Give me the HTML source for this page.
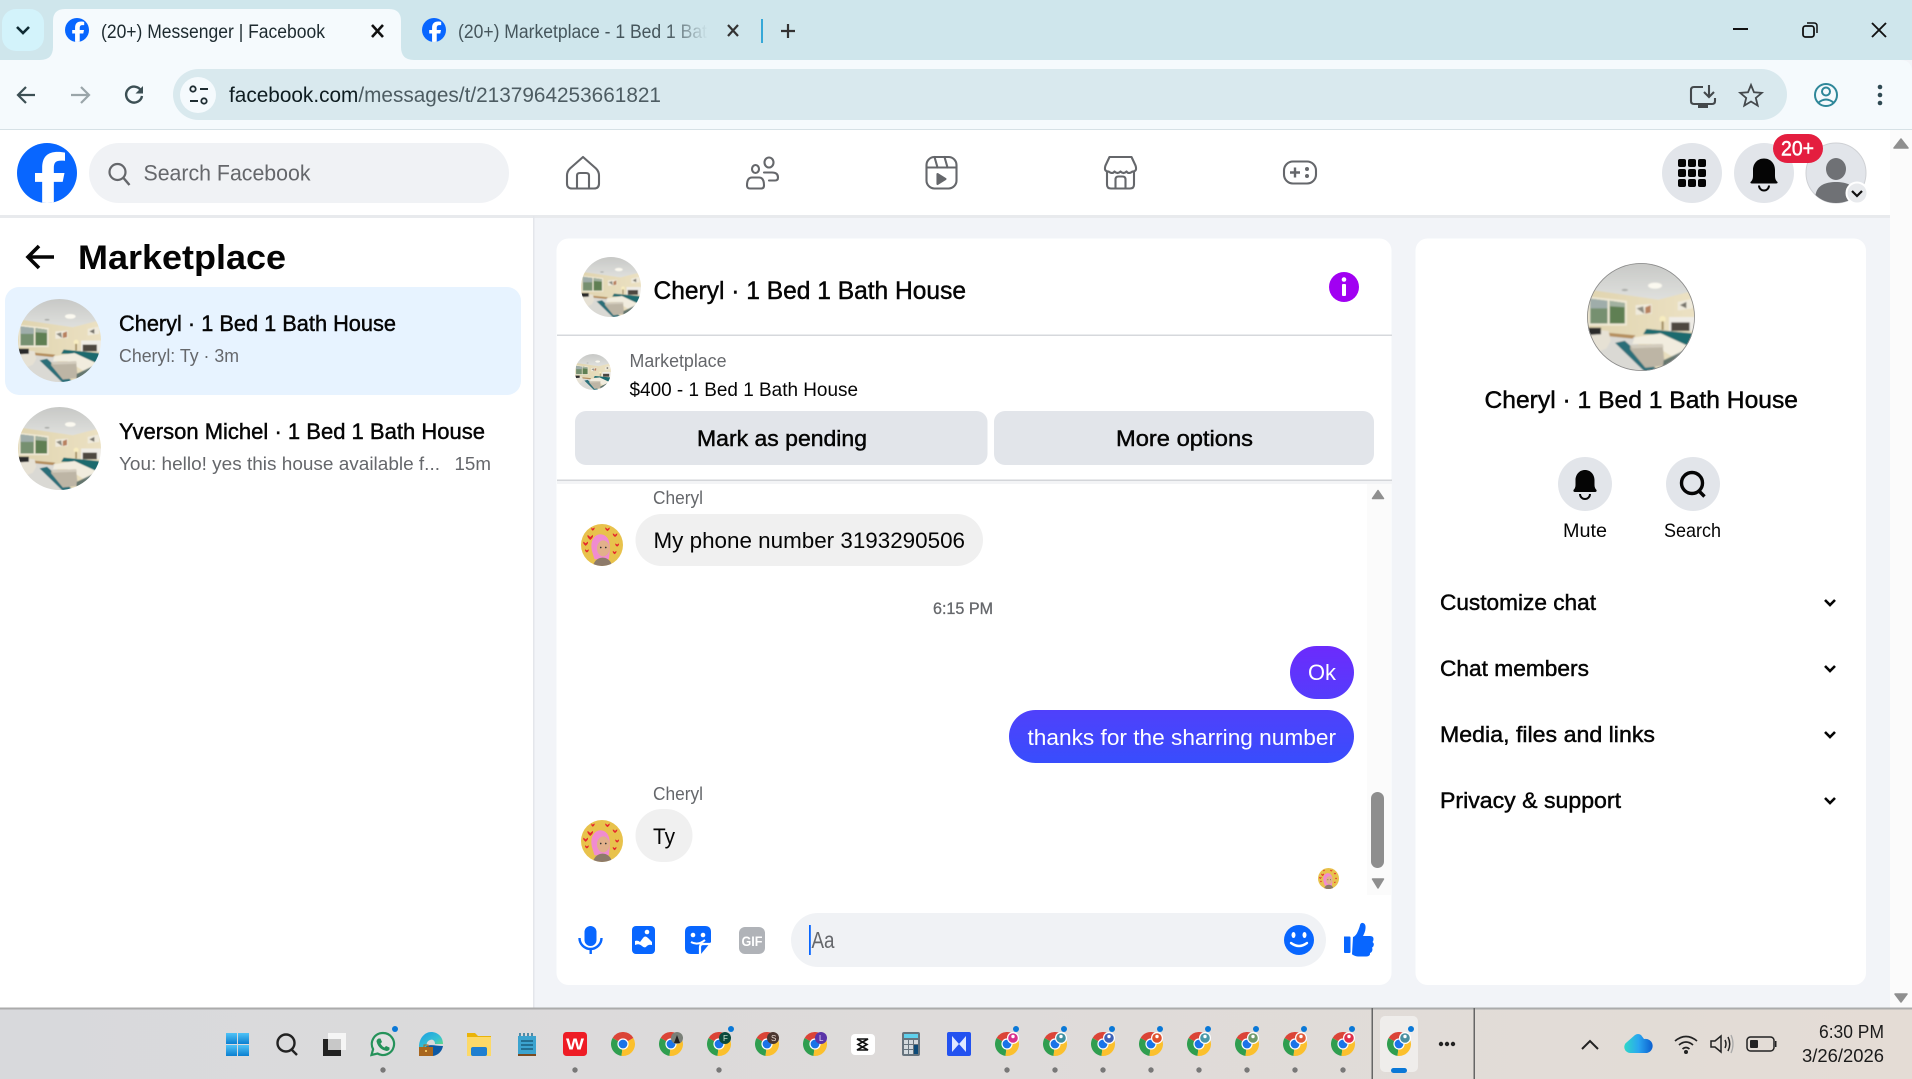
<!DOCTYPE html>
<html lang="en"><head><meta charset="utf-8"><title>Messenger | Facebook</title>
<style>
html,body{margin:0;padding:0;width:1912px;height:1079px;overflow:hidden;background:#f2f4f8}
svg{display:block;font-family:"Liberation Sans",sans-serif}
.m{stroke:currentColor;stroke-width:.45px}
.g{fill:#65676b;color:#65676b}
.k{fill:#050505;color:#050505}
</style></head><body>
<svg width="1912" height="1079" viewBox="0 0 1912 1079" xmlns="http://www.w3.org/2000/svg">
<defs>
<filter id="soft" x="-5%" y="-5%" width="110%" height="110%"><feGaussianBlur stdDeviation=".7"/></filter>
<linearGradient id="msg" gradientUnits="userSpaceOnUse" x1="0" y1="646" x2="0" y2="763"><stop offset="0" stop-color="#6c2bfc"/><stop offset=".6" stop-color="#4d42fb"/><stop offset="1" stop-color="#384dfd"/></linearGradient>
<linearGradient id="bar" x1="0" x2="1" y1="0" y2="0"><stop offset="0" stop-color="#d8d9dc"/><stop offset=".5" stop-color="#dedbda"/><stop offset="1" stop-color="#e4dcd5"/></linearGradient>
<linearGradient id="fade" x1="0" x2="1" y1="0" y2="0"><stop offset="0" stop-color="#cfe6ec" stop-opacity="0"/><stop offset="1" stop-color="#cfe6ec"/></linearGradient>
<linearGradient id="ceil" x1="0" x2="0" y1="0" y2="1"><stop offset="0" stop-color="#c4c5c3"/><stop offset="1" stop-color="#dfe0dd"/></linearGradient>
<linearGradient id="wall" x1="0" x2="1" y1="0" y2="0"><stop offset="0" stop-color="#dfd3ae"/><stop offset="1" stop-color="#ece2c4"/></linearGradient>
<linearGradient id="win" x1="0" x2="0" y1="0" y2="1"><stop offset="0" stop-color="#4fc3f7"/><stop offset="1" stop-color="#0b7fd0"/></linearGradient>
<linearGradient id="cloud" x1="0" x2="1" y1="0" y2="0"><stop offset="0" stop-color="#2fd8c8"/><stop offset=".5" stop-color="#2aa6f0"/><stop offset="1" stop-color="#0b5fd0"/></linearGradient>
<linearGradient id="edge" x1="0" x2="1" y1="0" y2="1"><stop offset="0" stop-color="#1b9de2"/><stop offset=".6" stop-color="#35c1d4"/><stop offset="1" stop-color="#6fe06a"/></linearGradient>
<clipPath id="c100"><circle cx="50" cy="50" r="50"/></clipPath>
<clipPath id="c36"><circle cx="18" cy="18" r="18"/></clipPath>

<symbol id="room" viewBox="0 0 100 100"><g clip-path="url(#c100)"><g filter="url(#soft)">
<rect x="-5" y="-5" width="110" height="110" fill="url(#wall)"/>
<path d="M-5 -5H105V25L97 26 66 34 4 25 -5 24Z" fill="url(#ceil)"/>
<ellipse cx="63" cy="21" rx="6.500" ry="2.800" fill="#fbf9f0"/><ellipse cx="35" cy="25" rx="3" ry="1" fill="#a9aba7"/>
<path d="M1 31L37 35V58L1 58Z" fill="#efe9d6"/>
<path d="M3 33L19 35V56L3 56Z" fill="#76906f"/><path d="M21 35L35 37V56L21 56Z" fill="#5f7f52"/>
<path d="M3 33L19 35V42L3 42Z" fill="#9fadaa"/><path d="M21 35L35 37V41L21 40Z" fill="#a2b1a0"/>
<path d="M45 39L60 38V47L45 48Z" fill="#efeadc"/><path d="M46 42L52 40 53 47Z" fill="#8c8a80"/><path d="M54 41L59 39V46L54 47Z" fill="#b8815f"/>
<path d="M84 36L98 33V42L84 44Z" fill="#efeadc"/><path d="M86 39L92 36V42Z" fill="#77746c"/>
<path d="M76 50H105V63H76Z" fill="#efece6"/><path d="M78 55H95V63H78Z" fill="#4d4640"/>
<circle cx="70" cy="52" r="3" fill="#f7ecc0"/><rect x="69" y="54" width="2" height="8" fill="#a38d60"/>
<path d="M-5 66L44 68 62 105H-5Z" fill="#dad9d4"/><path d="M2 63L45 67 42 70 2 66Z" fill="#b58f5f"/>
<path d="M-5 62H12L20 63 22 72 18 79 6 84 -5 78Z" fill="#e6e1d4"/><path d="M-5 60H13V66L-5 67Z" fill="#2a2a2c"/>
<path d="M55 61L97 65 105 75 93 78 70 66 52 66Z" fill="#1c6a6e"/>
<path d="M44 69L68 65 94 77 92 92 78 86 60 75 42 75Z" fill="#f1ecde"/>
<path d="M26 74L35 72 72 105H58Z" fill="#2a6e78"/>
<path d="M40 76L70 75 72 95 54 97 40 80Z" fill="#bdb5a5"/><path d="M40 76L70 75 71 78 42 79Z" fill="#d3ccbd"/>
<path d="M71 90L92 80 86 97 70 100Z" fill="#2c4a4c" opacity=".7"/>
</g></g></symbol>

<symbol id="cheryl" viewBox="0 0 100 100"><g clip-path="url(#c100)">
<rect width="100" height="100" fill="#e8c24c"/>
<g fill="#e5272d"><path d="M16 26l6 5 6-5q3 5-6 12-9-7-6-12z"/><path d="M6 42l5 4 5-4q3 4-5 10-8-6-5-10z"/><path d="M24 8l4 3 4-3q2 4-4 8-6-4-2-8z"/><path d="M58 8l5 4 5-4q2 4-5 9-7-5-5-9z"/><path d="M76 22l5 4 5-4q2 4-5 9-7-5-5-9z"/><path d="M82 46l4 3 4-3q2 4-4 8-6-4-4-8z"/><path d="M76 64l4 3 4-3q2 4-4 8-6-4-4-8z"/><path d="M10 60l4 3 4-3q2 4-4 8-6-4-4-8z"/></g>
<path d="M26 64C18 30 46 14 62 32 72 44 68 72 66 84H32Z" fill="#f08cd0"/>
<ellipse cx="53" cy="58" rx="15" ry="19" fill="#e2b08b"/>
<circle cx="47" cy="56" r="2" fill="#333"/><circle cx="59" cy="56" r="2" fill="#333"/>
<path d="M28 105C30 84 44 80 52 80S74 86 74 105Z" fill="#8d7a6a"/>
</g></symbol>

<symbol id="chrome" viewBox="0 0 24 24">
<path d="M12 12L1.6 6A12 12 0 0 1 22.4 6Z" fill="#db4437"/>
<path d="M12 12L1.6 6A12 12 0 0 0 10.5 23.9Z" fill="#2f9e4f"/>
<path d="M12 12L22.4 6A12 12 0 0 1 10.5 23.9Z" fill="#fbc02d"/>
<circle cx="12" cy="12" r="5.6" fill="#fff"/><circle cx="12" cy="12" r="4.4" fill="#1a73e8"/>
</symbol>
<symbol id="fb" viewBox="0 0 36 36"><circle cx="18" cy="18" r="18" fill="#0866ff"/><g clip-path="url(#c36)"><path d="M15.1 36V23.3h-4.3V18h4.3v-3c0-6.6 3-9.7 9.5-9.7 1.2 0 3.3.2 4.2.5v4.9c-.5 0-1.3-.1-2.3-.1-3.2 0-4.4 1.2-4.4 4.4V18h6.4l-1.1 5.3h-5.3V36z" fill="#fff"/></g></symbol>
</defs>

<!-- tab strip -->
<rect width="1912" height="60" fill="#cfe6ec"/>
<rect x="2" y="9" width="42" height="42" rx="14" fill="#d3f3fb"/>
<path d="M17 27l6 6 6-6" fill="none" stroke="#0e2a33" stroke-width="2.6"/>
<path d="M40 60Q53 60 53 47V21Q53 9 65 9H389Q401 9 401 21V47Q401 60 414 60Z" fill="#f5fafd"/>
<use href="#fb" x="65" y="18" width="24" height="24"/>
<text x="101" y="38" font-size="19" textLength="224" lengthAdjust="spacingAndGlyphs" fill="#1d2a2f">(20+) Messenger | Facebook</text>
<path d="M372 25l11 12M383 25l-11 12" stroke="#111" stroke-width="2.6"/>
<use href="#fb" x="422" y="18" width="24" height="24"/>
<text x="458" y="38" font-size="19" textLength="249" lengthAdjust="spacingAndGlyphs" fill="#46565c">(20+) Marketplace - 1 Bed 1 Bat</text>
<rect x="668" y="15" width="40" height="36" fill="url(#fade)"/><rect x="708" y="15" width="16" height="36" fill="#cfe6ec"/>
<path d="M728 25l10 11M738 25l-10 11" stroke="#333" stroke-width="2.2"/>
<rect x="761" y="19" width="2" height="24" fill="#35a8d8"/>
<path d="M788 24v14M781 31h14" stroke="#333" stroke-width="2.2"/>
<rect x="1733" y="28" width="15" height="2" fill="#111"/>
<rect x="1803" y="26" width="11" height="11" rx="2.5" fill="none" stroke="#111" stroke-width="1.8"/><path d="M1807 23h7q3 0 3 3v7" fill="none" stroke="#111" stroke-width="1.5"/>
<path d="M1872 23l14 14M1886 23l-14 14" stroke="#111" stroke-width="1.9"/>

<!-- toolbar -->
<path d="M0 60H1900Q1912 60 1912 72V129H0Z" fill="#f5fafd"/>
<rect y="129" width="1912" height="1.5" fill="#d6e1e6"/>
<path d="M35 95H19M26 87l-8 8 8 8" fill="none" stroke="#3c4f54" stroke-width="2.2"/>
<path d="M71 95H88M81 87l8 8-8 8" fill="none" stroke="#9aa5a9" stroke-width="2.2"/>
<path d="M141 90.500A8 8 0 1 0 142 96" fill="none" stroke="#3c4f54" stroke-width="2.4"/><path d="M143 86v7.500h-7.500z" fill="#3c4f54"/>
<rect x="173" y="69" width="1614" height="51" rx="25.5" fill="#d9e9ee"/>
<circle cx="198" cy="95" r="18" fill="#f5fafd"/>
<circle cx="193" cy="89" r="2.7" fill="none" stroke="#1f2d32" stroke-width="1.8"/><path d="M200 89h8M190 101h8" stroke="#1f2d32" stroke-width="1.9"/><circle cx="204" cy="101" r="2.7" fill="none" stroke="#1f2d32" stroke-width="1.8"/>
<text x="229" y="102" font-size="21.5" textLength="432" lengthAdjust="spacingAndGlyphs" fill="#4d5c62"><tspan fill="#0e1c20">facebook.com</tspan>/messages/t/2137964253661821</text>
<path d="M1703 87h-9q-3 0-3 3v11q0 3 3 3h18q3 0 3-3v-3" fill="none" stroke="#44494c" stroke-width="2.1"/><rect x="1698" y="104" width="10" height="4" fill="#44494c"/><path d="M1709 85v11M1704 92l5 5 5-5" fill="none" stroke="#44494c" stroke-width="2.1"/>
<path d="M1751 85l3 7.300 7.800.6-6 5.100 1.900 7.600-6.700-4.100-6.700 4.100 1.900-7.600-6-5.100 7.800-.6z" fill="none" stroke="#44494c" stroke-width="1.800"/>
<circle cx="1826" cy="95" r="11" fill="none" stroke="#2e8799" stroke-width="2"/><circle cx="1826" cy="91.500" r="4" fill="none" stroke="#2e8799" stroke-width="2"/><path d="M1818 103q8-7 16 0" fill="none" stroke="#2e8799" stroke-width="2"/>
<circle cx="1880" cy="87" r="2.300" fill="#2f4a53"/><circle cx="1880" cy="95" r="2.300" fill="#2f4a53"/><circle cx="1880" cy="103" r="2.300" fill="#2f4a53"/>

<!-- page -->
<rect y="130" width="1912" height="878" fill="#f2f4f8"/>
<rect x="1890" y="130" width="22" height="878" fill="#fbfbfb"/>
<path d="M1894 148l7-9 7 9z" fill="#8f8f8f" stroke="#8f8f8f" stroke-linejoin="round" stroke-width="1.500"/>
<path d="M1895 994l6 8 6-8z" fill="#8f8f8f" stroke="#8f8f8f" stroke-linejoin="round" stroke-width="1.500"/>
<rect y="215" width="1890" height="3" fill="#e8eaed"/>
<rect y="130" width="1890" height="85" fill="#fff"/>

<!-- header -->
<use href="#fb" x="17" y="143" width="60" height="60"/>
<rect x="89" y="143" width="420" height="60" rx="30" fill="#f0f2f5"/>
<circle cx="117.500" cy="172" r="8" fill="none" stroke="#65676b" stroke-width="2.200"/><path d="M123.500 178l6 7" stroke="#65676b" stroke-width="2.400"/>
<text x="143.500" y="180.500" font-size="22.500" textLength="167" lengthAdjust="spacingAndGlyphs" class="g">Search Facebook</text>

<g fill="none" stroke="#65676b" stroke-width="2.100" stroke-linejoin="round" stroke-linecap="round">
<g transform="translate(566,155.500)"><path d="M17 1.500L30 13Q33 16 33 20V28Q33 33 28 33H6Q1 33 1 28V20Q1 16 4 13Z"/><path d="M11 33V20Q11 17.500 14 17.500H20Q23 17.500 23 20V33"/></g>
<g transform="translate(745,155.500)"><ellipse cx="24" cy="7" rx="4.500" ry="5"/><ellipse cx="10.500" cy="13.500" rx="3.500" ry="4"/><path d="M2 30Q2 22 7 22H14Q19 22 19 30Q19 33 16 33H5Q2 33 2 30Z"/><path d="M19 17H27Q33 17 33 22Q33 25 30 25H24"/></g>
<g transform="translate(924.500,155.500)"><rect x="2" y="1.500" width="30" height="31.500" rx="8"/><path d="M2 12H32M10 1.500l3 10.500M20 1.500l3 10.500"/><path d="M13 18.500L21 23.500 13 28.500Z" fill="#65676b"/></g>
<g transform="translate(1103.500,155.500)"><path d="M6 1.500H28L32 10Q34 16 29 16 25 19 23 16 20 19 17 16 14 19 11 16 9 19 5 16 0 16 2 10Z"/><path d="M3.500 16V29Q3.500 33 7.500 33H26.500Q30.500 33 30.500 29V16"/><path d="M12 33V24Q12 21 15 21H19Q22 21 22 24V33"/></g>
<rect x="1284" y="161.500" width="32" height="22" rx="9"/>
</g>
<path d="M1295 167.500v10M1290 172.500h10" stroke="#65676b" stroke-width="2.400"/><circle cx="1307" cy="169" r="2" fill="#65676b"/><circle cx="1307" cy="176" r="2" fill="#65676b"/>

<circle cx="1692" cy="173" r="30" fill="#e2e5ea"/>
<g fill="#050505"><rect x="1678" y="159" width="8" height="8" rx="2"/><rect x="1688" y="159" width="8" height="8" rx="2"/><rect x="1698" y="159" width="8" height="8" rx="2"/><rect x="1678" y="169" width="8" height="8" rx="2"/><rect x="1688" y="169" width="8" height="8" rx="2"/><rect x="1698" y="169" width="8" height="8" rx="2"/><rect x="1678" y="179" width="8" height="8" rx="2"/><rect x="1688" y="179" width="8" height="8" rx="2"/><rect x="1698" y="179" width="8" height="8" rx="2"/></g>
<circle cx="1764" cy="173" r="30" fill="#e2e5ea"/>
<path d="M1764 158.500C1757 158.500 1753 164 1753 170V176Q1753 180 1750.500 182Q1750 183.500 1752 183.500H1776Q1778 183.500 1777.500 182Q1775 180 1775 176V170C1775 164 1771 158.500 1764 158.500Z" fill="#050505"/><path d="M1759 185.500a5 5 0 0 0 10 0" fill="none" stroke="#050505" stroke-width="2"/>
<circle cx="1836" cy="173" r="30" fill="#e2e5ea" stroke="#cfd1d5"/>
<ellipse cx="1836" cy="169" rx="10" ry="11" fill="#6f7175"/><path d="M1815.500 195C1817 185 1826 182 1836 182S1855 185 1857 195Q1848 203 1836 203T1815.500 195Z" fill="#6f7175"/>
<circle cx="1857" cy="193" r="10.500" fill="#e8eaed" stroke="#fff" stroke-width="2"/><path d="M1852 191l5 5 5-5" fill="none" stroke="#111" stroke-width="2.200"/>
<rect x="1773" y="134" width="50" height="29" rx="14.500" fill="#e41e3f"/>
<text x="1781" y="155.500" font-size="21" textLength="33" lengthAdjust="spacingAndGlyphs" fill="#fff" stroke="#fff" stroke-width=".5">20+</text>

<!-- left panel -->
<rect y="218" width="533" height="790" fill="#fff"/>
<rect x="533" y="216" width="1.500" height="792" fill="#e4e6eb"/>
<path d="M54 257H28M39 246L28 257 39 268" fill="none" stroke="#050505" stroke-width="3.600"/>
<text x="78" y="269" font-size="34" font-weight="700" textLength="208" lengthAdjust="spacingAndGlyphs" class="k">Marketplace</text>
<rect x="5" y="287" width="516" height="108" rx="14" fill="#e7f3ff"/>
<use href="#room" x="18" y="299" width="83" height="83"/>
<text x="119" y="331" font-size="22.500" textLength="277" lengthAdjust="spacingAndGlyphs" class="k m">Cheryl · 1 Bed 1 Bath House</text>
<text x="119" y="362" font-size="18.500" textLength="120" lengthAdjust="spacingAndGlyphs" class="g">Cheryl: Ty · 3m</text>
<use href="#room" x="18" y="407" width="83" height="83"/>
<text x="119" y="439" font-size="22.500" textLength="366" lengthAdjust="spacingAndGlyphs" class="k m">Yverson Michel · 1 Bed 1 Bath House</text>
<text x="119" y="470" font-size="18.500" textLength="321" lengthAdjust="spacingAndGlyphs" class="g">You: hello! yes this house available f...</text>
<text x="454.500" y="470" font-size="18.500" textLength="36.500" lengthAdjust="spacingAndGlyphs" class="g">15m</text>

<!-- chat card -->
<rect x="556.500" y="238.500" width="835" height="746.500" rx="12" fill="#fff"/>
<use href="#room" x="581" y="257" width="60" height="60"/>
<text x="653.500" y="299" font-size="25" textLength="312.500" lengthAdjust="spacingAndGlyphs" class="k m">Cheryl · 1 Bed 1 Bath House</text>
<circle cx="1344" cy="287" r="15" fill="#a100f2"/><circle cx="1344" cy="279.500" r="2.300" fill="#fff"/><rect x="1342" y="284" width="4" height="12" rx="1" fill="#fff"/>
<rect x="557" y="334.500" width="835" height="1.500" fill="#d6d8dc"/>
<use href="#room" x="575" y="354" width="36" height="36"/>
<text x="629.500" y="367" font-size="18" textLength="97" lengthAdjust="spacingAndGlyphs" class="g">Marketplace</text>
<text x="629.500" y="396" font-size="19.500" textLength="228.500" lengthAdjust="spacingAndGlyphs" class="k">$400 - 1 Bed 1 Bath House</text>
<rect x="575" y="411" width="412.500" height="54" rx="11" fill="#e2e5ea"/>
<rect x="994" y="411" width="380" height="54" rx="11" fill="#e2e5ea"/>
<text x="697" y="446" font-size="22" textLength="170" lengthAdjust="spacingAndGlyphs" class="k m">Mark as pending</text>
<text x="1116" y="446" font-size="22" textLength="137" lengthAdjust="spacingAndGlyphs" class="k m">More options</text>
<rect x="557" y="479.500" width="835" height="1.500" fill="#d3d5d9"/><rect x="557" y="481" width="835" height="3" fill="#f3f4f6"/>
<rect x="1367" y="484" width="24" height="411" fill="#fbfbfb"/>
<path d="M1372.500 498.500l5.500-8 5.500 8z" fill="#8f8f8f" stroke="#8f8f8f" stroke-linejoin="round" stroke-width="1.500"/>
<rect x="1371" y="792" width="13" height="76" rx="6.500" fill="#8e8e8e"/>
<path d="M1372.500 879l5.500 9 5.500-9z" fill="#8f8f8f" stroke="#8f8f8f" stroke-linejoin="round" stroke-width="1.500"/>

<text x="653" y="504" font-size="18" textLength="50" lengthAdjust="spacingAndGlyphs" class="g">Cheryl</text>
<use href="#cheryl" x="581" y="524" width="42" height="42"/>
<rect x="635.500" y="514" width="347.500" height="52" rx="26" fill="#f0f0f0"/>
<text x="653.500" y="548" font-size="22" textLength="311.500" lengthAdjust="spacingAndGlyphs" class="k">My phone number 3193290506</text>
<text x="933" y="614" font-size="17" textLength="60" lengthAdjust="spacingAndGlyphs" class="g m" style="stroke-width:.3px">6:15 PM</text>
<rect x="1290" y="646" width="64" height="53" rx="26.500" fill="url(#msg)"/>
<text x="1308" y="680" font-size="22" textLength="28" lengthAdjust="spacingAndGlyphs" fill="#fff">Ok</text>
<rect x="1009" y="710" width="345" height="53" rx="26.500" fill="url(#msg)"/>
<text x="1027.500" y="745" font-size="22" textLength="308.500" lengthAdjust="spacingAndGlyphs" fill="#fff">thanks for the sharring number</text>
<text x="653" y="800" font-size="18" textLength="50" lengthAdjust="spacingAndGlyphs" class="g">Cheryl</text>
<use href="#cheryl" x="581" y="820" width="42" height="42"/>
<rect x="635.500" y="809" width="57" height="53" rx="26.500" fill="#f0f0f0"/>
<text x="653" y="844" font-size="22" textLength="22" lengthAdjust="spacingAndGlyphs" class="k">Ty</text>
<use href="#cheryl" x="1318" y="868" width="21" height="21"/>

<!-- composer -->
<g fill="#0866ff">
<rect x="584.500" y="926" width="12" height="20" rx="6"/><path d="M579.500 938a11 11 0 0 0 22 0" fill="none" stroke="#0866ff" stroke-width="2.400"/><rect x="589.500" y="948" width="2.400" height="6"/>
<rect x="632" y="926" width="23" height="28" rx="4"/>
<path d="M635 941q3-1 5 1l3-4q2-3 5 0l4 4v3q-4-1-6 2-2 1-4-1-3-3-7-1z" fill="#fff"/><circle cx="647" cy="932" r="2.300" fill="#fff"/>
<path d="M691 926H705Q711 926 711 932V942L701 954H691Q685 954 685 948V932Q685 926 691 926Z"/>
<circle cx="693" cy="935" r="2.300" fill="#fff"/><circle cx="703" cy="935" r="2.300" fill="#fff"/><path d="M691 942q7 4 14-2" fill="none" stroke="#fff" stroke-width="2"/><path d="M700 954V947Q700 944 703 944H711" fill="none" stroke="#fff" stroke-width="2.200"/>
</g>
<rect x="739" y="927" width="26" height="27" rx="6" fill="#b0b3b8"/>
<text x="741.500" y="946" font-size="14" font-weight="700" textLength="21" lengthAdjust="spacingAndGlyphs" fill="#fff">GIF</text>
<rect x="791" y="913" width="535" height="54" rx="27" fill="#f0f2f5"/>
<rect x="809" y="925" width="1.800" height="30" fill="#0866ff"/>
<text x="811.500" y="948" font-size="23" textLength="23" lengthAdjust="spacingAndGlyphs" class="g">Aa</text>
<circle cx="1299" cy="940" r="15" fill="#0866ff"/><ellipse cx="1293.500" cy="935" rx="2" ry="3" fill="#fff"/><ellipse cx="1304.500" cy="935" rx="2" ry="3" fill="#fff"/><path d="M1291 943q8 6 16 0" fill="none" stroke="#fff" stroke-width="2.400" stroke-linecap="round"/>
<path transform="translate(0,-2)" d="M1344 938.500h5.500q1 0 1 1V954q0 1-1 1H1345q-1 0-1-1ZM1353 939q3-1 5-6t2-6q1-2.500 3-2t2.500 3q.5 4-2 9l-.5 1h7q3.500 0 3.500 3 0 2-1 3 1.500 1 1.300 3-.3 2-1.800 2.800.8 1.200.3 2.700-.5 2-2.300 2.500.3 1.500-.7 2.500-1 1-3 1h-8q-3 0-6-2l-.3-.200z" fill="#0866ff"/>

<!-- info card -->
<rect x="1415.500" y="238.500" width="450.500" height="746.500" rx="12" fill="#fff"/>
<use href="#room" x="1587" y="263" width="108" height="108"/>
<circle cx="1641" cy="317" r="53.500" fill="none" stroke="#8a8a8a" stroke-width=".8"/>
<text x="1484.500" y="408" font-size="24.500" textLength="313.500" lengthAdjust="spacingAndGlyphs" class="k m">Cheryl · 1 Bed 1 Bath House</text>
<circle cx="1585" cy="484" r="27" fill="#e2e5ea"/>
<path d="M1585 470C1579 470 1575.500 475 1575.500 480V485Q1575.500 488 1573.500 490Q1573 492 1575 492H1595Q1597 492 1596.500 490Q1594.500 488 1594.500 485V480C1594.500 475 1591 470 1585 470Z" fill="#050505"/><path d="M1580 494a5 5 0 0 0 10 0" fill="none" stroke="#050505" stroke-width="2"/>
<circle cx="1693" cy="484" r="27" fill="#e2e5ea"/>
<circle cx="1692" cy="483" r="10.500" fill="none" stroke="#050505" stroke-width="3.400"/><path d="M1699 491l5.500 5.500" stroke="#050505" stroke-width="3.400"/>
<text x="1563" y="537" font-size="19.500" textLength="44" lengthAdjust="spacingAndGlyphs" class="k">Mute</text>
<text x="1664" y="537" font-size="19.500" textLength="57" lengthAdjust="spacingAndGlyphs" class="k">Search</text>
<text x="1440" y="610" font-size="22" textLength="156" lengthAdjust="spacingAndGlyphs" class="k m">Customize chat</text>
<text x="1440" y="676" font-size="22" textLength="149" lengthAdjust="spacingAndGlyphs" class="k m">Chat members</text>
<text x="1440" y="742" font-size="22" textLength="215" lengthAdjust="spacingAndGlyphs" class="k m">Media, files and links</text>
<text x="1440" y="808" font-size="22" textLength="181" lengthAdjust="spacingAndGlyphs" class="k m">Privacy &amp; support</text>
<g fill="none" stroke="#050505" stroke-width="2.600"><path d="M1825 600l5 5 5-5"/><path d="M1825 666l5 5 5-5"/><path d="M1825 732l5 5 5-5"/><path d="M1825 798l5 5 5-5"/></g>

<!-- taskbar -->
<rect y="1008" width="1912" height="71" fill="url(#bar)"/>
<rect y="1007.500" width="1912" height="2" fill="#ababab"/>
<g fill="url(#win)"><rect x="226" y="1033" width="11" height="11"/><rect x="238" y="1033" width="11" height="11"/><rect x="226" y="1045" width="11" height="11"/><rect x="238" y="1045" width="11" height="11"/></g>
<circle cx="286" cy="1043" r="8.500" fill="none" stroke="#222" stroke-width="2.400"/><path d="M292 1050l5 5" stroke="#222" stroke-width="2.400"/>
<rect x="328" y="1033" width="18" height="17" fill="#f5f5f5"/><rect x="323" y="1039" width="18" height="17" fill="#222"/><rect x="328" y="1039" width="13" height="11" fill="#c8c8c8"/>
<path d="M383 1033a11 11 0 1 1-5.500 20.500l-6 1.500 1.600-5.800A11 11 0 0 1 383 1033Z" fill="#fff" fill-opacity=".2" stroke="#25925a" stroke-width="2.200"/>
<path d="M378.500 1038.500l2 0 1.500 3.500-1.500 1.500q1.500 3 4 4l1.500-1.500 3.500 1.500 0 2q-1 1.500-3 1.500-8-1.500-10-9.500 0-2 2-3z" fill="#25925a"/>
<circle cx="395" cy="1029" r="3" fill="#0a78d7"/>
<path d="M419 1047c0-9 6-15 12-15 7 0 12 5 12 12l-8 0c0-4-3-5-5-4-3 1-4 4-3 7z" fill="url(#edge)"/><path d="M425 1048c3-5 10-2 18-2-1 6-6 10-11 10h-13c0-3 3-7 6-8z" fill="#0c59a4"/><rect x="419" y="1047" width="14" height="9" fill="#a8661e"/><rect x="424" y="1045" width="4" height="3" fill="none" stroke="#a8661e"/><rect x="425" y="1050" width="2" height="2" fill="#f0c060"/>
<path d="M467 1033h8l3 3h13v20h-24z" fill="#eab308"/><rect x="467" y="1037" width="24" height="19" fill="#fcd968"/><rect x="471" y="1047" width="16" height="9" rx="2" fill="#1f7fd0"/>
<rect x="518" y="1036" width="18" height="19" fill="#3ba3cf"/><rect x="518" y="1054" width="18" height="2" fill="#7a4a20"/><path d="M520 1033v3M524 1033v3M528 1033v3M532 1033v3" stroke="#236f94" stroke-width="1.500"/><path d="M521 1041h12M521 1045h12M521 1049h12" stroke="#14506e" stroke-width="1.200"/>
<rect x="563" y="1032" width="24" height="24" rx="3.500" fill="#ee1c25"/>
<text x="566" y="1049.500" font-size="16" font-weight="700" textLength="18" lengthAdjust="spacingAndGlyphs" fill="#fff">W</text>
<use href="#chrome" x="611" y="1032" width="24" height="24"/>
<use href="#chrome" x="659" y="1032" width="24" height="24"/><circle cx="677" cy="1038" r="6" fill="#7a8078"/><path d="M674 1043l3-8 3 8z" fill="#222"/>
<use href="#chrome" x="707" y="1032" width="24" height="24"/><circle cx="725" cy="1038" r="6" fill="#0c4a3c"/><text x="723" y="1041" font-size="8" fill="#d5e8d5">F</text><circle cx="731" cy="1029" r="3" fill="#0a78d7"/>
<use href="#chrome" x="755" y="1032" width="24" height="24"/><circle cx="773" cy="1038" r="6" fill="#4a3630"/><text x="771" y="1041" font-size="8" fill="#e8d8d0">S</text>
<use href="#chrome" x="803" y="1032" width="24" height="24"/><circle cx="821" cy="1038" r="6" fill="#5a34a8"/><text x="819" y="1041" font-size="8" fill="#e8d8f8">L</text>
<rect x="851" y="1034" width="24" height="21" rx="4" fill="#fff"/><path d="M857 1039h11l-10 5.500 10 5.500h-11l10-5.500z" fill="none" stroke="#111" stroke-width="1.600"/>
<rect x="902" y="1032" width="18" height="24" rx="2" fill="#66737d"/><rect x="904" y="1034" width="14" height="4" fill="#5fd0ec"/><g fill="#d4dade"><rect x="904" y="1040" width="4" height="4"/><rect x="909" y="1040" width="4" height="4"/><rect x="914" y="1040" width="4" height="4"/><rect x="904" y="1045" width="4" height="4"/><rect x="909" y="1045" width="4" height="4"/><rect x="904" y="1050" width="4" height="4"/><rect x="909" y="1050" width="4" height="4"/></g><rect x="914" y="1045" width="4" height="9" fill="#0c4a78"/>
<rect x="947" y="1032" width="24" height="24" rx="2" fill="#2352f0"/><path d="M952 1036l7 8-7 8zM966 1036l-7 8 7 8z" fill="#dfe8ff"/>

<g>
<use href="#chrome" x="995" y="1032" width="24" height="24"/><circle cx="1013" cy="1038" r="6" fill="#fff"/><circle cx="1013" cy="1038" r="4.800" fill="#d8308c"/><circle cx="1013" cy="1036.500" r="1.700" fill="#fff"/><circle cx="1016" cy="1029" r="3" fill="#0a78d7"/>
<use href="#chrome" x="1043" y="1032" width="24" height="24"/><circle cx="1061" cy="1038" r="6" fill="#fff"/><circle cx="1061" cy="1038" r="4.800" fill="#3f8f9f"/><circle cx="1061" cy="1036.500" r="1.700" fill="#fff"/><circle cx="1064" cy="1029" r="3" fill="#0a78d7"/>
<use href="#chrome" x="1091" y="1032" width="24" height="24"/><circle cx="1109" cy="1038" r="6" fill="#fff"/><circle cx="1109" cy="1038" r="4.800" fill="#3f62b8"/><circle cx="1109" cy="1036.500" r="1.700" fill="#fff"/><circle cx="1112" cy="1029" r="3" fill="#0a78d7"/>
<use href="#chrome" x="1139" y="1032" width="24" height="24"/><circle cx="1157" cy="1038" r="6" fill="#fff"/><circle cx="1157" cy="1038" r="4.800" fill="#e0502c"/><circle cx="1157" cy="1036.500" r="1.700" fill="#fff"/><circle cx="1160" cy="1029" r="3" fill="#0a78d7"/>
<use href="#chrome" x="1187" y="1032" width="24" height="24"/><circle cx="1205" cy="1038" r="6" fill="#fff"/><circle cx="1205" cy="1038" r="4.800" fill="#4a98a8"/><circle cx="1205" cy="1036.500" r="1.700" fill="#fff"/><circle cx="1208" cy="1029" r="3" fill="#0a78d7"/>
<use href="#chrome" x="1235" y="1032" width="24" height="24"/><circle cx="1253" cy="1038" r="6" fill="#fff"/><circle cx="1253" cy="1038" r="4.800" fill="#6f9a6a"/><circle cx="1253" cy="1036.500" r="1.700" fill="#fff"/><circle cx="1256" cy="1029" r="3" fill="#0a78d7"/>
<use href="#chrome" x="1283" y="1032" width="24" height="24"/><circle cx="1301" cy="1038" r="6" fill="#fff"/><circle cx="1301" cy="1038" r="4.800" fill="#e05a3a"/><circle cx="1301" cy="1036.500" r="1.700" fill="#fff"/><circle cx="1304" cy="1029" r="3" fill="#0a78d7"/>
<use href="#chrome" x="1331" y="1032" width="24" height="24"/><circle cx="1349" cy="1038" r="6" fill="#fff"/><circle cx="1349" cy="1038" r="4.800" fill="#e0304a"/><circle cx="1349" cy="1036.500" r="1.700" fill="#fff"/><circle cx="1352" cy="1029" r="3" fill="#0a78d7"/>
</g>
<g fill="#787878"><circle cx="383" cy="1070" r="2.700"/><circle cx="575" cy="1070" r="2.700"/><circle cx="719" cy="1070" r="2.700"/><circle cx="1007" cy="1070" r="2.700"/><circle cx="1055" cy="1070" r="2.700"/><circle cx="1103" cy="1070" r="2.700"/><circle cx="1151" cy="1070" r="2.700"/><circle cx="1199" cy="1070" r="2.700"/><circle cx="1247" cy="1070" r="2.700"/><circle cx="1295" cy="1070" r="2.700"/><circle cx="1343" cy="1070" r="2.700"/></g>
<rect x="1371.500" y="1008" width="1.500" height="71" fill="#666"/><rect x="1473.500" y="1008" width="1.500" height="71" fill="#666"/>
<rect x="1380" y="1016" width="38" height="56" rx="5" fill="#efedeb"/>
<use href="#chrome" x="1387" y="1032" width="24" height="24"/><circle cx="1405" cy="1038" r="6" fill="#fff"/><circle cx="1405" cy="1038" r="4.800" fill="#4a8fa0"/><circle cx="1405" cy="1036.500" r="1.700" fill="#fff"/><circle cx="1411" cy="1029" r="3" fill="#0a78d7"/>
<rect x="1391" y="1068" width="16" height="5" rx="2.500" fill="#0a78d7"/>
<g fill="#222"><circle cx="1441" cy="1044" r="2.200"/><circle cx="1447" cy="1044" r="2.200"/><circle cx="1453" cy="1044" r="2.200"/></g>
<path d="M1582 1049l8-8 8 8" fill="none" stroke="#222" stroke-width="2"/>
<path d="M1630 1053a6 6 0 0 1-3-11l8-7q3-2 6 0l3 4a6.500 6.500 0 0 1 3 14Z" fill="url(#cloud)"/>
<path d="M1675 1041q11-9 22 0M1679 1045q7-6 14 0M1682.500 1049q3.500-3 7 0" fill="none" stroke="#222" stroke-width="1.700"/><circle cx="1686" cy="1052" r="2" fill="#222"/>
<path d="M1711 1041h4l6-5v16l-6-5h-4z" fill="none" stroke="#222" stroke-width="1.500"/><path d="M1725 1040q2 4 0 8M1728 1037q3.500 7 0 14" fill="none" stroke="#222" stroke-width="1.500"/><path d="M1731 1035q4 9 0 18" fill="none" stroke="#aaa" stroke-width="1.300"/>
<rect x="1747" y="1037" width="27" height="14" rx="3.500" fill="none" stroke="#222" stroke-width="1.500"/><rect x="1750" y="1040" width="8" height="8" rx="1" fill="#222"/><rect x="1775" y="1041" width="1.500" height="6" fill="#222"/>
<text x="1819" y="1038" font-size="18" textLength="65" lengthAdjust="spacingAndGlyphs" fill="#1a1a1a">6:30 PM</text>
<text x="1802" y="1062" font-size="18" textLength="82" lengthAdjust="spacingAndGlyphs" fill="#1a1a1a">3/26/2026</text>
</svg>
</body></html>
